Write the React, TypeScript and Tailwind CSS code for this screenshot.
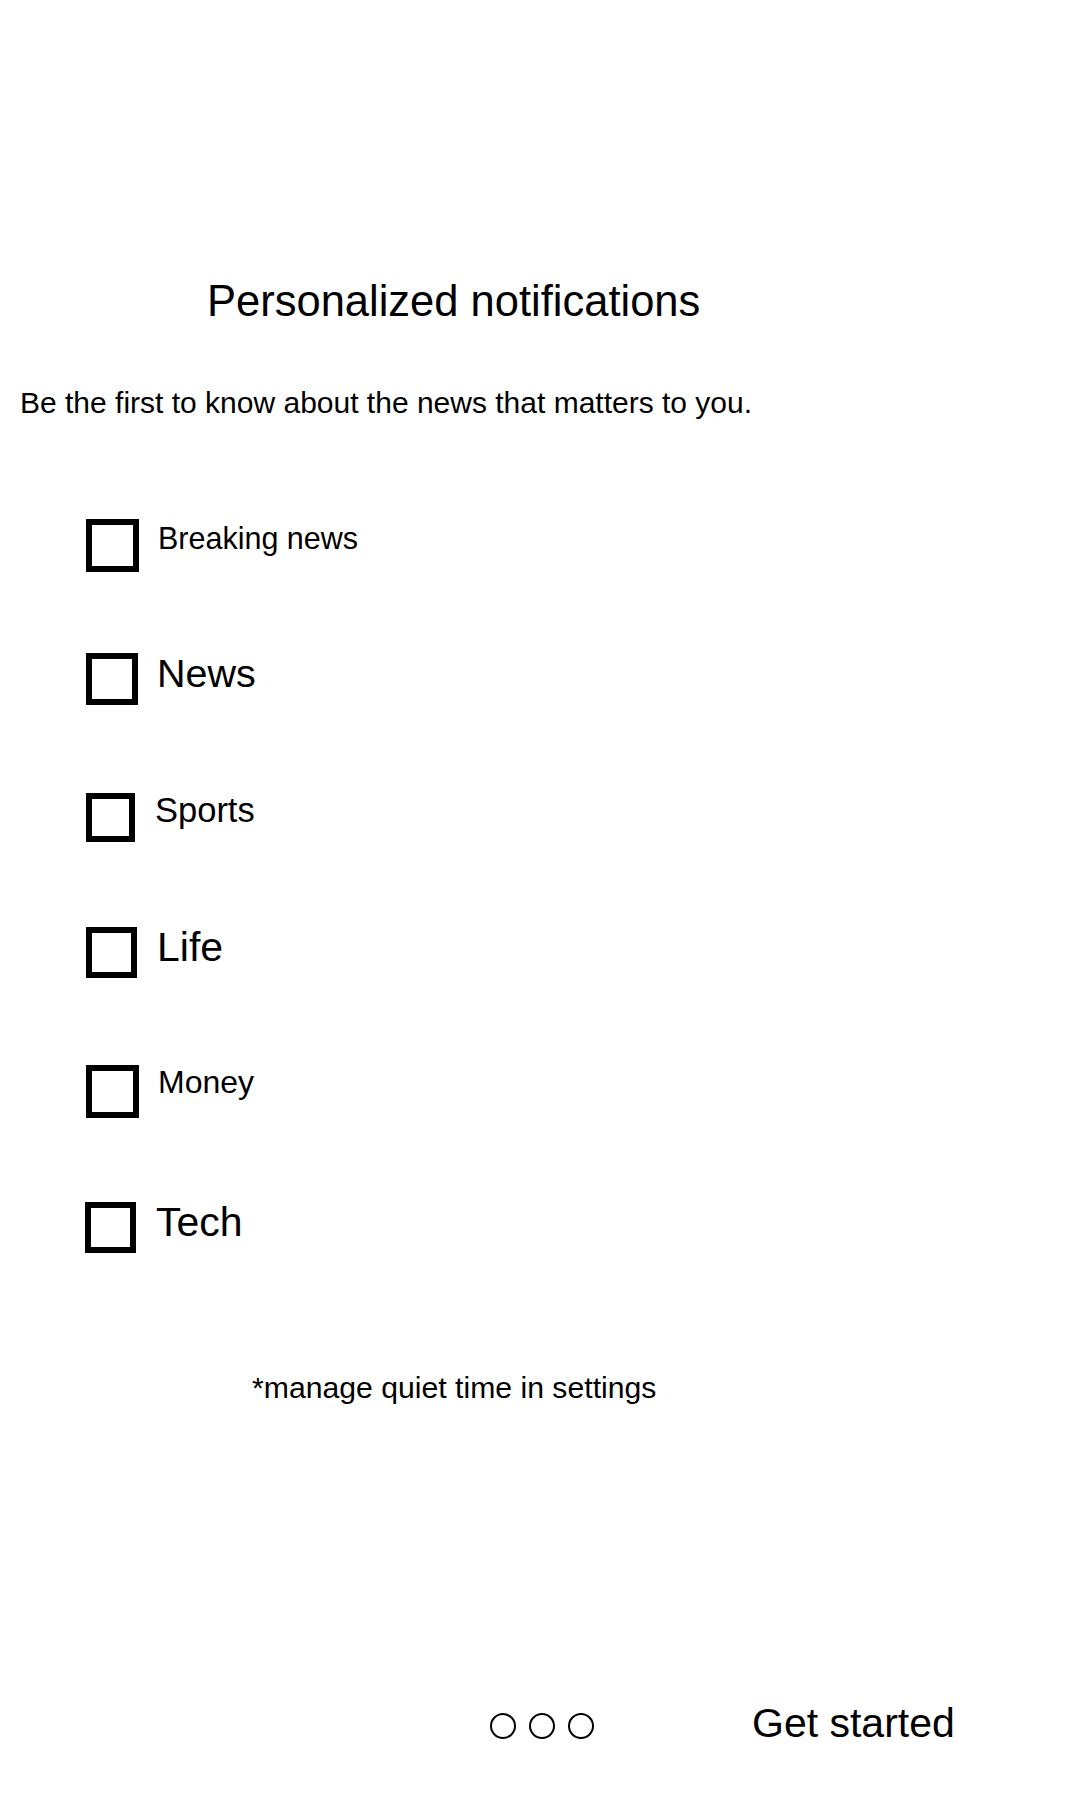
import React from "react";

type Row = { label: string; size: number; box: number; mt: number; boxLeft: number; gap: number; lift: number };

const rows: Row[] = [
  { label: "Breaking news", size: 30.5, box: 53, mt: 101, boxLeft: 86, gap: 19, lift: 14 },
  { label: "News", size: 39.5, box: 52, mt: 81, boxLeft: 86, gap: 19, lift: 10 },
  { label: "Sports", size: 34.5, box: 49, mt: 88, boxLeft: 86, gap: 20, lift: 14 },
  { label: "Life", size: 41, box: 51, mt: 85, boxLeft: 86, gap: 20, lift: 10 },
  { label: "Money", size: 32, box: 53, mt: 87, boxLeft: 86, gap: 19, lift: 19 },
  { label: "Tech", size: 41, box: 51, mt: 84, boxLeft: 85, gap: 20, lift: 10 },
];

function CheckRow({ r }: { r: Row }) {
  return (
    <div className="flex items-center" style={{ marginTop: r.mt, paddingLeft: r.boxLeft, height: r.box }}>
      <div
        className="shrink-0 border-[6px] border-black bg-white"
        style={{ width: r.box, height: r.box }}
      />
      <span
        className="leading-none whitespace-nowrap"
        style={{ fontSize: r.size, marginLeft: r.gap, paddingBottom: r.lift }}
      >
        {r.label}
      </span>
    </div>
  );
}

export default function App() {
  return (
    <div className="w-[1080px] h-[1800px] bg-white text-black font-['Liberation_Sans',Arial,sans-serif] flex flex-col overflow-hidden">
      <h1 className="pt-[280px] pl-[207px] text-[43.5px] leading-none font-normal whitespace-nowrap">
        Personalized notifications
      </h1>
      <p className="mt-[64px] pl-[20px] text-[30px] leading-none whitespace-nowrap">
        Be the first to know about the news that matters to you.
      </p>
      <div className="flex flex-col">
        {rows.map((r) => (
          <CheckRow key={r.label} r={r} />
        ))}
      </div>
      <p className="mt-[120px] pl-[252px] text-[30.2px] leading-none whitespace-nowrap">
        *manage quiet time in settings
      </p>
      <div className="mt-[300px] flex items-center h-[41px]">
        <div className="pl-[490px] flex items-center gap-[13px] mt-[5px]">
          <span className="block w-[26px] h-[26px] rounded-full border-[2px] border-black" />
          <span className="block w-[26px] h-[26px] rounded-full border-[2px] border-black" />
          <span className="block w-[26px] h-[26px] rounded-full border-[2px] border-black" />
        </div>
        <span className="ml-[158px] text-[41px] leading-none whitespace-nowrap">Get started</span>
      </div>
    </div>
  );
}
